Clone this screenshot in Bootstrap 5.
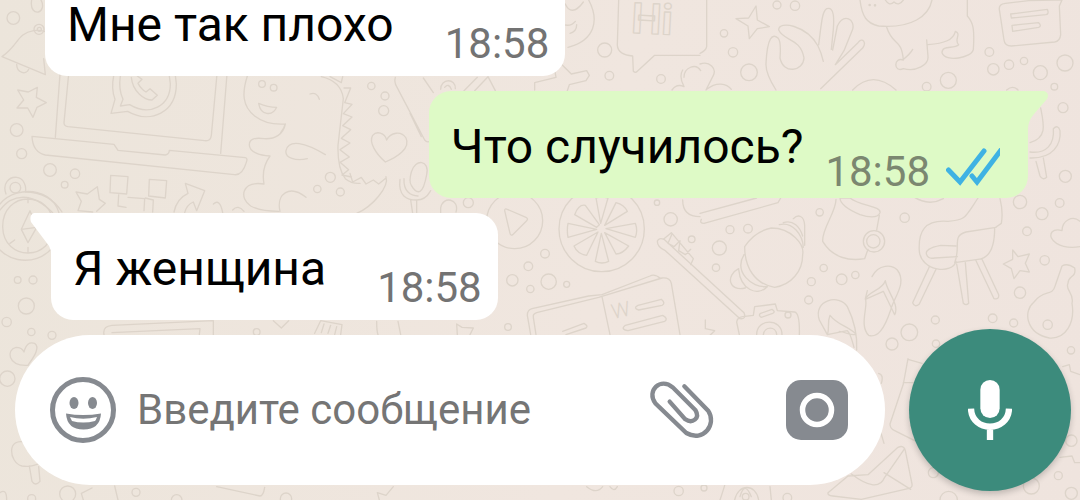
<!DOCTYPE html>
<html lang="ru">
<head>
<meta charset="utf-8">
<meta name="viewport" content="width=device-width, initial-scale=1">
<title>Чат</title>
<link href="https://cdn.jsdelivr.net/npm/bootstrap@5.3.0/dist/css/bootstrap.min.css" rel="stylesheet">
<style>
  body { font-family: Roboto, "Liberation Sans", sans-serif; background: #eee5dd; color: #000; }
  .wallpaper { z-index: 0; fill: none; stroke: #ddd4ca; stroke-width: 4; stroke-linejoin: round; stroke-linecap: round; background: linear-gradient(100deg, #ece5db, #f0e6df 55%, #efe4de); }
  .wallpaper text { font-family: Roboto, sans-serif; }
  .chat { z-index: 1; }
  .thread { gap: 15px; min-height: 0; }
  .bubble { background: #fff; border-radius: 22px; padding: 31px 16px 8px 22px; }
  .bubble-first { margin-left: 45px; }
  .bubble-in { margin-left: 51px; border-top-left-radius: 0; }
  .bubble-out { margin-right: 52px; background: #defac6; border-top-right-radius: 0; padding-right: 28px; }
  .bubble-text { font-size: 48px; line-height: 50px; padding-bottom: 18px; }
  .bubble-time { font-size: 42px; line-height: 48px; color: #737373; margin-left: 51px; }
  .bubble-out .bubble-time { color: #7b8770; margin-left: 22px; margin-bottom: -6px; }
  .ticks { width: 54px; height: 38px; margin: 0 0 4px 16px; }
  .tail { top: 0; width: 21px; height: 38px; }
  .tail-left { right: 100%; }
  .tail-right { left: 100%; }
  .composer { padding: 9px 9px 9px 15px; gap: 24px; }
  .field { height: 150px; border-radius: 75px; padding: 0 36px 0 34px; min-width: 0; }
  .field input { font-size: 42px; line-height: 52px; color: #222; min-width: 0; padding: 0; margin-left: 20px; }
  .field input::placeholder { color: #757575; opacity: 1; }
  .icon-btn { line-height: 0; color: #868a90; }
  .icon-gap { margin-right: 69px; }
  .mic { width: 162px; height: 162px; background: #3c8b7c; box-shadow: 0 3px 6px #0003; }
</style>
</head>
<body>
<svg class="wallpaper position-absolute top-0 start-0 w-100 h-100" viewBox="0 0 3240 1500" preserveAspectRatio="xMidYMid slice" aria-hidden="true">
  <!-- upper left: bell, laptop, dinosaur -->
  <g>
    <circle cx="40" cy="54" r="19"/><path d="M95 0c-5 30 10 38 20 36s18-18 8-36"/>
    <path d="M6 170c50-35 45-70 95-78q40-5 60 20M6 170l130 54-5-48M50 193c0 28 30 32 36 15"/><circle cx="117" cy="88" r="15"/><circle cx="118" cy="88" r="6"/>
    <path d="M112 262l-3 30 30 16-28 14-12 30-16-28-32 0 20-24-18-30 32 6z"/>
    <circle cx="50" cy="390" r="19"/><circle cx="65" cy="461" r="15"/><circle cx="150" cy="510" r="19"/><circle cx="225" cy="521" r="14"/><circle cx="194" cy="554" r="10"/>
    <path d="M180 222L166 412M206 222l-14 146q0 10 12 12l410 42q18 2 20-16l17-184M681 222l-19 238M96 409l246 24 12 18 142 14q12-2 12-14l228 22q8 2 3 14-12 40-36 37L136 465q-38-8-40-56z"/>
    <path d="M341 228q-8 38 4 70l-12 42 50-6c70 40 146 2 146-82l-3-26M361 228q-6 40 8 70l-8 20 28-4c60 36 122 4 122-62l-3-24M394 232c4 44 40 68 62 68l16-14-22-20-12 10q-14-8-24-26l12-12-14-10"/>
    <path d="M742 228c-16 50-16 90 22 120q36 28 92 24c-6 30-30 46-64 44q-44-6-44 18c0 22 30 32 62 34-22 30-22 62-18 84-70-10-74 44-40 66q30 16 84 16M856 372q-4 14-14 26M918 592c-50-40-90-10-78 42M930 282q20-8 28 16M976 464c-60-36-110-48-118-12-4 22 30 32 64 24M776 310q28 12 54 12-10 22-30 18t-24-30zM964 230q60 14 66 66l-16 140q-2 70 22 100 20 16 44 14"/>
    <circle cx="786" cy="252" r="10"/><circle cx="821" cy="263" r="10"/>
    <path d="M990 230l34 18 4-18M1032 264h20l-18 44 22 5-26 28 26 10-28 26 24 12-28 26 26 14-30 20 28 22-28 16 26 22-20 16 28 6"/>
    <circle cx="991" cy="532" r="15"/><circle cx="952" cy="567" r="11"/><circle cx="1021" cy="576" r="12"/>
    <path d="M332 526l52 4-4 52-50-4zM448 538l52 4-4 52-50-6zM356 584l-2 34 24 4M384 592l50 4-2 36M436 594l24 6-2 36"/>
    <path d="M228 576l34 6 30-22 6 38 18 12-26 24M228 576l16 28-10 28 44 4M556 550l58 22-24 60-10-26q-20 8-26 32M556 550l8 30q-34 16-42 56M640 612q20-18 28 26M698 630q16-18 34 4"/>
    <path d="M18 582c-12-32 10-52 32-50s30 28 26 44c50 0 84 20 110 60M0 630c10-12 20-22 30-28q60-32 128 36"/><circle cx="46" cy="563" r="16"/>
  </g>
  <!-- upper middle: heart, microphone, paper plane, speech bubble -->
  <g transform="translate(1020 0)">
    <path d="M30 520l8 26 26-14 14 20 22-12 16 12 22-18M138 530c10 30-40 90-88 110"/>
    <circle cx="94" cy="258" r="11"/><circle cx="135" cy="288" r="12"/><circle cx="131" cy="332" r="15"/>
    <path d="M136 486c-30-26-50-60-38-80 12-14 36-8 42 14 12-24 44-28 58-6 14 30-24 56-62 72zM166 232q-4 14 4 28l84 160q8 10 18 2M210 340l34 70M250 234l30 44M302 268c0-34 46-34 44-2M314 262q12-14 20 6M372 272l40-40M404 272l40-42 22 42"/>
    <path d="M214 556q-8-10 0-40c12-42 56-36 46 8q-8 44-20 50t-26-18zM180 538c-6 50 20 62 50 62s38-22 42-28M192 536c-2 38 20 52 42 52M212 600l6 40M230 602l0 38"/>
    <circle cx="385" cy="608" r="15"/>
    <path d="M584 270l0-22 64-16-6-34 24-4 28 28 46-10 8 14-10 16-50 12-6 18M676 12c10 24 30 28 54-6M746 0c32 60 20 120-62 142M660 70q30 14 46-6M690 100q20-6 20-26"/>
    <circle cx="794" cy="150" r="21"/><circle cx="808" cy="227" r="13"/><circle cx="963" cy="237" r="13"/>
    <path d="M836 0l-4 136q2 28 46 32l2 46q6 6 12 0l52-48h136M1032 232c0-30 36-44 50-20M996 270q14-20 36-10-16-30-4-50"/>
    <text x="872" y="98" font-size="128" font-weight="700" transform="rotate(3 872 98)">Hi</text>
  </g>
  <!-- upper right: ok hand, cat, note, microphone -->
  <g transform="translate(2100 0)">
    <path d="M20 0V140q-2 12-20 20M168 18l4 42 36 20-36 6-24 30-4-38-36-22 38-2z"/>
    <circle cx="231" cy="15" r="12"/><circle cx="285" cy="17" r="14"/><circle cx="72" cy="100" r="11"/><circle cx="99" cy="157" r="14"/><circle cx="147" cy="217" r="25"/>
    <path d="M228 270q-32-50-30-80c4-80 20-90 36-76q10 10 6 60c10 50 70 40 72 0-10-60-60-50-76-84 0-30 84-14 118 48q10 20 16 46M356 134c8-60 10-100 24-108 24-8 22 34 20 62l-6 60M398 150l14-72c20-40 54-20 46 10l-26 64-26 42 68-66c14-18 26 0 14 16l-126 122M0 192c30-10 50 14 40 34L18 270M20 268c30-24 60-18 74 0M458 270q60-62 130 0"/>
    <path d="M480 0c6 50 20 70 56 78M536 78c100 8 150-30 160-78M560 82c20 60 44 30 50 98-30-10-30 40 0 26 40 10 76-12 74-36l-4-50M608 180q24-20 30-32M684 134c50-4 76-14 82-40 20 8-6 26 10 40-14 14-50 0-50 24 10 30 90 16 94-10 4-60 0-80-18-100V0M556 0q12 20 26 6 14 14 28-6"/>
    <circle cx="509" cy="15" r="2"/><circle cx="525" cy="16" r="2"/><circle cx="745" cy="241" r="24"/><circle cx="680" cy="260" r="13"/><circle cx="868" cy="156" r="13"/><circle cx="880" cy="208" r="17"/><circle cx="927" cy="194" r="14"/><circle cx="972" cy="183" r="11"/><circle cx="1021" cy="218" r="21"/><circle cx="1095" cy="189" r="24"/><circle cx="1063" cy="260" r="10"/><circle cx="1089" cy="323" r="15"/><circle cx="1096" cy="529" r="18"/><path d="M920 270q18-16 34 0"/>
    <path d="M1066 0h20l-8 18 4 86q-2 20-18 22l-130 12q-20 0-22-18l-14-92q-2-16 18-18l70-8zM932 42l110-14q6 14-4 16l-104 10zM936 76l80-8q10 10 0 14l-78 12z"/>
    <path d="M1022 324c10 50 20 90-32 104M1060 386c4 46-20 76-70 70M1060 386q14-14 20 6c4 40-20 84-90 82M1008 484l12 44q8 14 20 4l-10-58"/>
  </g>
  <!-- lower left: compass, hearts, lollipop -->
  <g transform="translate(0 570)">
    <path d="M0 42C50-20 190-10 180 110 176 210 60 240 0 180M8 110c0-110 150-110 152-4 0 110-150 110-152 4zM90 62l-26 56 20 40 26-46zM64 118l46-6M84 22v16M30 160l14-10M84 186v-14"/>
    <circle cx="53" cy="270" r="10"/><circle cx="99" cy="270" r="12"/><circle cx="79" cy="348" r="24"/><circle cx="20" cy="396" r="14"/><circle cx="94" cy="426" r="11"/><circle cx="156" cy="436" r="12"/><circle cx="22" cy="566" r="23"/>
    <path d="M84 526c-62 4-66-48-36-54q18 0 24 14 8-34 32-26c20 14-10 50-20 66zM80 758c-62-20-54 60-14 70q40 6 70-20M88 828l8 46q10 16 24 0l-4-44"/>
    <path d="M312 434c-4-22 10-26 24-28l304-14v44M336 428l264-12-2 18M820 392l24 22 22-22M944 430l18-38 64 12-4 30M972 402l-8 26M992 406l-8 24M1010 410l-6 24"/><circle cx="770" cy="426" r="10"/>
    <path d="M0 908q20-14 20 22M250 930l-6-20 32-16M344 888l10 42M650 890l130 28q10 0 14-26"/><circle cx="95" cy="926" r="12"/><circle cx="203" cy="912" r="24"/><circle cx="408" cy="907" r="12"/><circle cx="530" cy="930" r="16"/><circle cx="858" cy="926" r="17"/>
  </g>
  <!-- lower middle: play badge, citrus, book, toothbrush -->
  <g transform="translate(1020 570)">
    <circle cx="524" cy="92" r="84"/><path d="M494 62q0-8 8-4l56 24q8 4 2 10l-42 42q-6 4-8-4zM348 66c12-40-40-50-46-12v16"/>
    <circle cx="785" cy="117" r="128"/>
    <path d="M778 104l-42-58q-20-4-32 28l66 38zM770 118l-86-18q-4 20 0 42zM774 126l-72 42q10 24 38 28zM784 130l-18 84q20 10 40 0zM794 128l34 64q20 0 38-24zM798 116l88 26q8-20 0-42zM794 106l68-42q-10-20-34-26zM782 100l-14-76q16-6 36 0z"/>
    <circle cx="615" cy="191" r="13"/><circle cx="565" cy="229" r="13"/><circle cx="517" cy="271" r="17"/><circle cx="571" cy="297" r="11"/><circle cx="626" cy="275" r="23"/><circle cx="680" cy="283" r="9"/><circle cx="504" cy="411" r="10"/><circle cx="992" cy="88" r="20"/><circle cx="1055" cy="148" r="10"/><circle cx="951" cy="38" r="8"/>
    <path d="M572 434l-10-58q0-16 14-20l170-38 40-4 144-56q14-8 32 8M588 434l-8-52q-2-10 10-14l186-46 190-58q24-2 28 16l26 154M786 320l24 114M668 424l64-24q14 8 6 14l-60 20M894 346l70-18q14 12 2 18l-70 14q-18-6-2-14zM856 406l112-30q18 10 6 18l-110 28q-24-4-8-16z"/>
    <text x="820" y="386" font-size="60" font-weight="100" transform="rotate(-12 820 386)" stroke-width="2">W</text>
    <path d="M952 154q4-12 20-6l240 220q8 20-12 18L976 182q-24-10-24-28zM972 146l22-18 66 78-8 18M996 132l-12 28 18 10 18-18-4 30 20 12 16-16M1028 30q0 50 52 50"/>
    <path d="M110 394q0 30 4 40M174 394l8 40M352 434l-2-32 16 10 34 2-10 20M118 930l-6-22 26 8 22-26M740 890q30 24 48 0M810 890q12 18 22 0"/><circle cx="1016" cy="903" r="14"/>
  </g>
  <!-- lower right: croissant, cup, chair, sandals, guitar, envelope -->
  <g transform="translate(2100 570)">
    <path d="M0 70l170-46M4 88q-6 12 8 12l222-62 8-14"/>
    <circle cx="90" cy="119" r="12"/><circle cx="144" cy="116" r="13"/><circle cx="58" cy="174" r="21"/><circle cx="48" cy="233" r="11"/><circle cx="359" cy="67" r="11"/><circle cx="371" cy="234" r="11"/><circle cx="334" cy="275" r="12"/><circle cx="425" cy="268" r="16"/><circle cx="466" cy="255" r="11"/><circle cx="326" cy="330" r="12"/><circle cx="614" cy="83" r="14"/>
    <path d="M134 170q30-46 80-56c60 0 100 50 94 80 0 50-34 90-84 98-60-10-90-60-90-122zM238 104c40-10 70 30 72 68M250 98c30-10 50 14 58 40M280 86c14-14 32-10 34 20v60M132 194c-30 50 20 100 70 96-30 30-80 10-86-52M116 236c-40 20-30 70 20 58"/>
    <path d="M408 28c0 40-42 86-40 126 30 50 80 60 126 52l10-28M420 24q0 24 60 50 50 16 60-6c4-20-60-20-90-44zM538 76l-8 44"/><circle cx="522" cy="154" r="32"/><circle cx="520" cy="154" r="20"/>
    <path d="M640 20q46 30 90 6M834 24c-40 60-36 66-90 70-70-6-90 30-86 90 6 60 100 70 110 30M900 26q10 40 4 74l-20 14q0 90-50 94l-70 10c20-50-10-80 34-92l90-14M768 168l-46-2q-50 10-42 28 4 14 24 10l68-4M688 230l-50 108q6 16 20 4l50-104M770 222l20 118q8 8 16 0l-10-122M828 212l54 114q16 4 14-12l-50-106"/>
    <circle cx="960" cy="36" r="20"/><circle cx="1026" cy="71" r="18"/><circle cx="1079" cy="39" r="13"/><circle cx="981" cy="124" r="13"/><circle cx="1034" cy="211" r="14"/><circle cx="960" cy="308" r="17"/>
    <path d="M938 180l16 20 34-8-12 28 12 26-28-4-18 24-8-30-24-14 28-14zM1140 170c-60 10-100-22-84-44q10-10 30-4c0-30 32-48 54-28M1086 228q16-10 38 6c6 30-20 22-20 46-10 20 20 30 12 60 10 60-20 108-68 104-70-14-80-80-46-108 30-40 54-14 64-50z"/><circle cx="1043" cy="404" r="14"/>
    <path d="M516 260c20-40 60-36 76-20 30 40-10 80-20 120-20 60-40 84-66 76-30-30 0-90-10-110l6-24M556 272c-10 30-50 30-60 56l54-24 34 70c16-30-24-70-28-102zM358 390c-20-60 60-80 84-40 20 40 30 90 28 130M358 390l24 44M390 376c-10 24 0 40-8 58l60-12c10 8 16 36 20 50M390 376c24 30 50 30 78 56-8 8-30-6-50-8"/>
    <circle cx="628" cy="427" r="25"/><circle cx="576" cy="462" r="18"/><circle cx="706" cy="390" r="12"/><circle cx="878" cy="385" r="13"/><circle cx="941" cy="399" r="12"/><circle cx="1113" cy="481" r="11"/><circle cx="708" cy="461" r="11"/>
    <path d="M118 434l-8-38q2-14 18-16l32-4 4-26 62-8 6 20 52 4q16 4 14 70M182 370l34-12q12 8 2 12l-34 12q-10-6-2-12zM170 434c0-50 76-50 76 0M190 434c4-26 38-26 40 0M16 390l0 26 28 6-14 14"/><circle cx="264" cy="375" r="9"/>
    <path d="M624 506l-14 76-40 120q0 14 14 20l60 30M624 508l42 12M610 578h30M384 908l60-50 60-4 90-82q18-8 22 10l20 100q2 12-12 14l-140 32-86-10q-16-2-14-10zM454 852q80 60 100 10l60-86M552 848l80 50M540 720l12 40M536 550q16 4 8 30"/>
    <path d="M60 930q10-30 14-44M104 930c10-50 64-50 72 0M210 890l4 40M120 920q14-50 34 0"/><circle cx="137" cy="920" r="10"/><circle cx="12" cy="894" r="9"/><circle cx="262" cy="923" r="13"/><circle cx="746" cy="930" r="26"/><circle cx="994" cy="888" r="24"/><circle cx="1114" cy="910" r="18"/><circle cx="1075" cy="857" r="12"/><circle cx="700" cy="848" r="15"/><circle cx="1114" cy="752" r="17"/><path d="M1088 530l20-6 4 20 28 10M1080 802l36-4 8 20h16"/>
  </g>
</svg>

<main class="chat position-relative vh-100 d-flex flex-column overflow-hidden">
  <section class="thread flex-grow-1 d-flex flex-column justify-content-end" aria-label="Сообщения">
    <article class="bubble bubble-first align-self-start d-flex align-items-end">
      <div class="bubble-text">Мне так плохо</div>
      <time class="bubble-time">18:58</time>
    </article>
    <article class="bubble bubble-out align-self-end d-flex align-items-end position-relative">
      <svg class="tail tail-right position-absolute" viewBox="0 0 21 38" aria-hidden="true"><path d="M-1 0H16Q22 2 19 8L6 23Q0 30 0 38H-1Z" fill="#defac6"/></svg>
      <div class="bubble-text">Что случилось?</div>
      <time class="bubble-time">18:58</time>
      <svg class="ticks" viewBox="0 0 54 38" role="img" aria-label="Прочитано"><path d="M2.500 22L14 34 38 3M26 28l5 6L55 2" fill="none" stroke="#3fb2e3" stroke-width="5" stroke-linecap="round" stroke-linejoin="miter"/></svg>
    </article>
    <article class="bubble bubble-in align-self-start d-flex align-items-end position-relative">
      <svg class="tail tail-left position-absolute" viewBox="0 0 21 38" aria-hidden="true"><path d="M22 0H4Q-1 2 1 9L16 29Q20 33 21 38H22Z" fill="#fff"/></svg>
      <div class="bubble-text">Я женщина</div>
      <time class="bubble-time">18:58</time>
    </article>
  </section>

  <form class="composer d-flex align-items-center" onsubmit="return false">
    <div class="field bg-white flex-grow-1 d-flex align-items-center">
      <button type="button" class="icon-btn btn p-0 border-0" aria-label="Смайлики">
        <svg width="68" height="68" viewBox="0 0 68 68"><circle cx="34" cy="34" r="30.500" fill="none" stroke="currentColor" stroke-width="5"/><ellipse cx="25" cy="27" rx="4.500" ry="6" fill="currentColor"/><ellipse cx="43.500" cy="27" rx="4.500" ry="6" fill="currentColor"/><path d="M17 37.500q17 3 35 0-1 16-17.500 16T17 37.500z" fill="currentColor"/><path d="M21 41q13 3.500 27 0-1 3-2 4-12 3-23 0z" fill="#fff"/></svg>
      </button>
      <input id="message" type="text" class="form-control border-0 bg-transparent shadow-none flex-grow-1" placeholder="Введите сообщение" aria-label="Введите сообщение">
      <button type="button" class="icon-btn icon-gap btn p-0 border-0" aria-label="Прикрепить">
        <svg width="68" height="64" viewBox="54 54 204 192"><path d="M163 79l72 74c26 38-14 96-66 66L76 130C48 92 92 50 128 82l68 68c16 26-10 42-30 28l-47-53" fill="none" stroke="currentColor" stroke-width="13" stroke-linecap="round"/></svg>
      </button>
      <button type="button" class="icon-btn btn p-0 border-0" aria-label="Камера">
        <svg width="64" height="62" viewBox="0 0 64 62"><rect x="1" y="1" width="62" height="60" rx="15" fill="currentColor"/><circle cx="32" cy="31" r="14.500" fill="none" stroke="#fff" stroke-width="5.500"/></svg>
      </button>
    </div>
    <button type="button" class="mic btn rounded-circle border-0 p-0 flex-shrink-0 d-flex align-items-center justify-content-center" aria-label="Голосовое сообщение">
      <svg width="44" height="60" viewBox="806 568 132 180"><rect x="843" y="568" width="58" height="114" rx="29" fill="#fff"/><path d="M815 654c2 72 112 72 114 0M872 708v40" fill="none" stroke="#fff" stroke-width="19"/></svg>
    </button>
  </form>
</main>
<script src="https://cdn.jsdelivr.net/npm/bootstrap@5.3.0/dist/js/bootstrap.bundle.min.js"></script>
</body>
</html>
